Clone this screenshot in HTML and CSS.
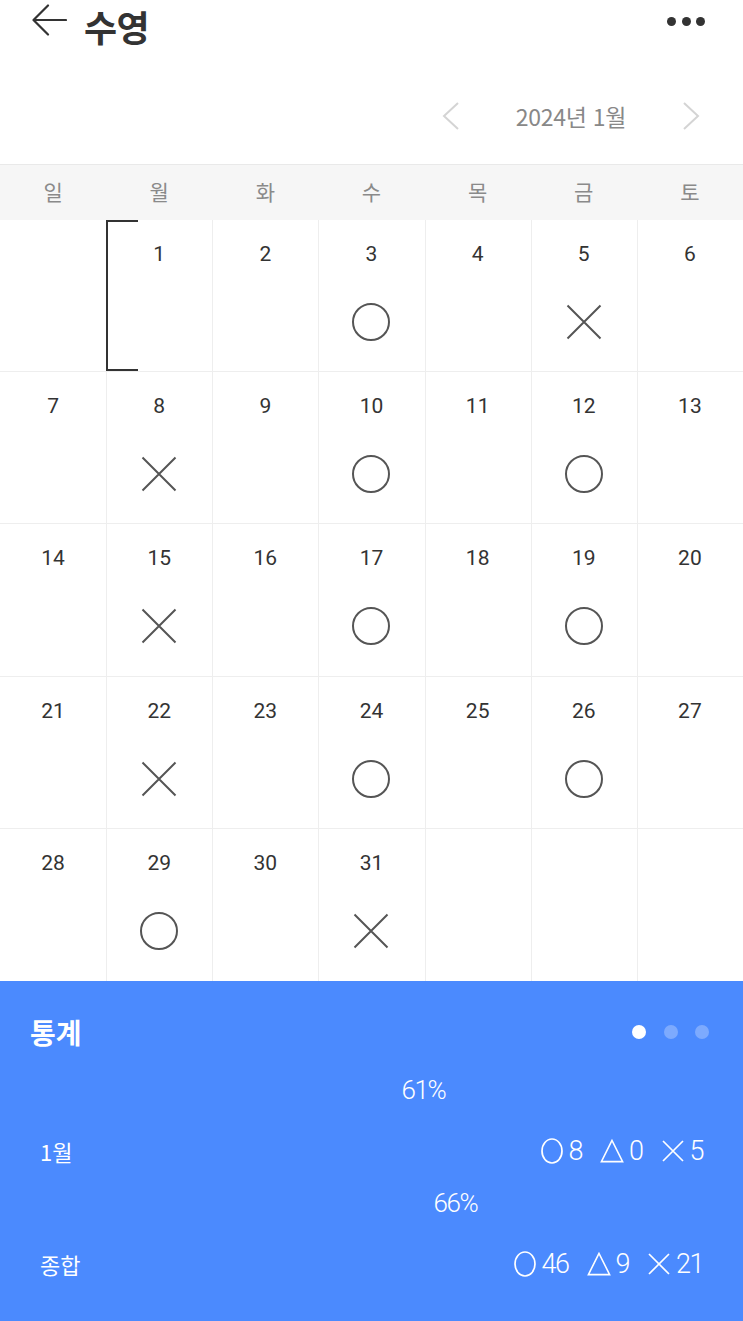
FILE: index.html
```html
<!DOCTYPE html>
<html lang="ko">
<head>
<meta charset="utf-8">
<title>수영</title>
<link rel="stylesheet" href="styles.css">
</head>
<body>
<div class="app">
  <header class="topbar">
    <div class="topbar-left">
      <svg class="back" width="36" height="34" viewBox="0 0 36 34"><path d="M35 16H3M17 1.5L2.5 16 17 30.5" fill="none" stroke="#333" stroke-width="2.2" stroke-linecap="round" stroke-linejoin="round"/></svg>
      <h1 class="title">수영</h1>
    </div>
    <div class="more"><span></span><span></span><span></span></div>
  </header>

  <nav class="month-nav">
    <svg class="chev" width="20" height="30" viewBox="0 0 20 30"><path d="M17 2L3 15l14 13" fill="none" stroke="#d4d4d4" stroke-width="2"/></svg>
    <span class="month-label">2024년 1월</span>
    <svg class="chev" width="20" height="30" viewBox="0 0 20 30"><path d="M3 2l14 13L3 28" fill="none" stroke="#d4d4d4" stroke-width="2"/></svg>
  </nav>

  <div class="weekdays">
    <div>일</div><div>월</div><div>화</div><div>수</div><div>목</div><div>금</div><div>토</div>
  </div>

  <div class="calendar">
    <div class="cell first"></div>
    <div class="cell selected"><span class="num">1</span></div>
    <div class="cell"><span class="num">2</span></div>
    <div class="cell"><span class="num">3</span><svg class="mark" viewBox="0 0 40 40"><circle cx="20" cy="20" r="18" fill="none" stroke="#555" stroke-width="2"/></svg></div>
    <div class="cell"><span class="num">4</span></div>
    <div class="cell"><span class="num">5</span><svg class="mark" viewBox="0 0 40 40"><path d="M3.5 3.5l33 33M36.5 3.5l-33 33" stroke="#555" stroke-width="2"/></svg></div>
    <div class="cell"><span class="num">6</span></div>

    <div class="cell first"><span class="num">7</span></div>
    <div class="cell"><span class="num">8</span><svg class="mark" viewBox="0 0 40 40"><path d="M3.5 3.5l33 33M36.5 3.5l-33 33" stroke="#555" stroke-width="2"/></svg></div>
    <div class="cell"><span class="num">9</span></div>
    <div class="cell"><span class="num">10</span><svg class="mark" viewBox="0 0 40 40"><circle cx="20" cy="20" r="18" fill="none" stroke="#555" stroke-width="2"/></svg></div>
    <div class="cell"><span class="num">11</span></div>
    <div class="cell"><span class="num">12</span><svg class="mark" viewBox="0 0 40 40"><circle cx="20" cy="20" r="18" fill="none" stroke="#555" stroke-width="2"/></svg></div>
    <div class="cell"><span class="num">13</span></div>

    <div class="cell first"><span class="num">14</span></div>
    <div class="cell"><span class="num">15</span><svg class="mark" viewBox="0 0 40 40"><path d="M3.5 3.5l33 33M36.5 3.5l-33 33" stroke="#555" stroke-width="2"/></svg></div>
    <div class="cell"><span class="num">16</span></div>
    <div class="cell"><span class="num">17</span><svg class="mark" viewBox="0 0 40 40"><circle cx="20" cy="20" r="18" fill="none" stroke="#555" stroke-width="2"/></svg></div>
    <div class="cell"><span class="num">18</span></div>
    <div class="cell"><span class="num">19</span><svg class="mark" viewBox="0 0 40 40"><circle cx="20" cy="20" r="18" fill="none" stroke="#555" stroke-width="2"/></svg></div>
    <div class="cell"><span class="num">20</span></div>

    <div class="cell first"><span class="num">21</span></div>
    <div class="cell"><span class="num">22</span><svg class="mark" viewBox="0 0 40 40"><path d="M3.5 3.5l33 33M36.5 3.5l-33 33" stroke="#555" stroke-width="2"/></svg></div>
    <div class="cell"><span class="num">23</span></div>
    <div class="cell"><span class="num">24</span><svg class="mark" viewBox="0 0 40 40"><circle cx="20" cy="20" r="18" fill="none" stroke="#555" stroke-width="2"/></svg></div>
    <div class="cell"><span class="num">25</span></div>
    <div class="cell"><span class="num">26</span><svg class="mark" viewBox="0 0 40 40"><circle cx="20" cy="20" r="18" fill="none" stroke="#555" stroke-width="2"/></svg></div>
    <div class="cell"><span class="num">27</span></div>

    <div class="cell first bottom"><span class="num">28</span></div>
    <div class="cell bottom"><span class="num">29</span><svg class="mark" viewBox="0 0 40 40"><circle cx="20" cy="20" r="18" fill="none" stroke="#555" stroke-width="2"/></svg></div>
    <div class="cell bottom"><span class="num">30</span></div>
    <div class="cell bottom"><span class="num">31</span><svg class="mark" viewBox="0 0 40 40"><path d="M3.5 3.5l33 33M36.5 3.5l-33 33" stroke="#555" stroke-width="2"/></svg></div>
    <div class="cell bottom"></div>
    <div class="cell bottom"></div>
    <div class="cell bottom"></div>
  </div>

  <section class="stats">
    <div class="stats-head">
      <h2 class="stats-title">통계</h2>
      <div class="pager"><span class="on"></span><span></span><span></span></div>
    </div>

    <div class="group">
      <div class="pct-track"><span class="pct" style="left:61%">61%</span></div>
      <div class="stat-row">
        <span class="stat-label">1월</span>
        <div class="counts">
          <span class="count"><svg class="ic" viewBox="0 0 24 26"><ellipse cx="12" cy="13" rx="10" ry="12" fill="none" stroke="#fff" stroke-width="1.7"/></svg><span class="n">8</span></span>
          <span class="count"><svg class="ic" viewBox="0 0 26 26"><path d="M13 1.5L1.5 24.5h23z" fill="none" stroke="#fff" stroke-width="1.7" stroke-linejoin="miter"/></svg><span class="n">0</span></span>
          <span class="count"><svg class="ic" viewBox="0 0 24 26"><path d="M2 3l20 20M22 3L2 23" stroke="#fff" stroke-width="1.7"/></svg><span class="n">5</span></span>
        </div>
      </div>
    </div>

    <div class="group">
      <div class="pct-track"><span class="pct" style="left:66%">66%</span></div>
      <div class="stat-row">
        <span class="stat-label">종합</span>
        <div class="counts">
          <span class="count"><svg class="ic" viewBox="0 0 24 26"><ellipse cx="12" cy="13" rx="10" ry="12" fill="none" stroke="#fff" stroke-width="1.7"/></svg><span class="n">46</span></span>
          <span class="count"><svg class="ic" viewBox="0 0 26 26"><path d="M13 1.5L1.5 24.5h23z" fill="none" stroke="#fff" stroke-width="1.7" stroke-linejoin="miter"/></svg><span class="n">9</span></span>
          <span class="count"><svg class="ic" viewBox="0 0 24 26"><path d="M2 3l20 20M22 3L2 23" stroke="#fff" stroke-width="1.7"/></svg><span class="n">21</span></span>
        </div>
      </div>
    </div>
  </section>
</div>
</body>
</html>
```

FILE: styles.css
```css
* { box-sizing: border-box; }
html, body { margin: 0; padding: 0; background: #fff; }
body {
  font-family: "Noto Sans CJK KR", "Noto Sans", Roboto, sans-serif;
  color: #333;
}
.app { width: 743px; min-height: 1321px; display: flex; flex-direction: column; }

.topbar {
  height: 44px;
  display: flex;
  align-items: center;
  justify-content: space-between;
  padding: 0 38px 0 31px;
}
.topbar-left { display: flex; align-items: center; }
.back { display: block; margin-top: -3px; }
.title {
  margin: 8px 0 0 17px;
  font-size: 36px;
  font-weight: 700;
  line-height: 1;
  color: #333;
  letter-spacing: -0.5px;
}
.more { display: flex; gap: 5.3px; margin-top: -2px; }
.more span { width: 9px; height: 9px; border-radius: 50%; background: #333; }

.month-nav {
  height: 120px;
  padding: 46px 42px 22px 0;
  display: flex;
  align-items: center;
  justify-content: flex-end;
}
.month-nav .chev { display: block; }
.month-label {
  font-size: 23px;
  color: #888;
  margin: 0 55px 0 55px;
  line-height: 52px;
  letter-spacing: -0.3px;
}

.weekdays {
  height: 56px;
  border-top: 1px solid #e9e9e9;
  background: #f6f6f6;
  display: grid;
  grid-template-columns: repeat(7, 1fr);
  align-items: center;
  text-align: center;
  font-size: 21px;
  line-height: 1;
  color: #8a8a8a;
  padding-bottom: 3px;
}

.calendar {
  display: grid;
  grid-template-columns: repeat(7, 1fr);
  grid-template-rows: repeat(5, 152.2px);
}
.cell {
  position: relative;
  border-left: 1px solid #eeeeee;
  border-bottom: 1px solid #eeeeee;
  display: flex;
  flex-direction: column;
  align-items: center;
  padding-top: 21px;
  padding-right: 1px;
}
.cell.first { border-left: none; padding-right: 0; }
.cell.bottom { border-bottom: none; }
.num {
  font-family: Roboto, "Noto Sans", sans-serif;
  font-size: 21px;
  line-height: 26px;
  color: #333;
}
.mark { width: 40px; height: 40px; margin-top: 35px; display: block; }
.selected::before {
  content: "";
  position: absolute;
  left: -1px;
  top: 0;
  bottom: 0;
  width: 30px;
  border: 2px solid #333;
  border-right: none;
}

.stats {
  flex: 1;
  background: #4b8afe;
  color: #fff;
}
.stats-head {
  display: flex;
  justify-content: space-between;
  align-items: center;
  padding: 32px 34px 9px 30px;
  height: 79px;
}
.stats-title {
  margin: 0;
  font-size: 28px;
  font-weight: 700;
  line-height: 38px;
  color: #fff;
}
.pager { display: flex; gap: 17.5px; }
.pager span { width: 14px; height: 14px; border-radius: 50%; background: rgba(255,255,255,0.28); }
.pager span.on { background: #fff; }

.group { height: 113px; padding-top: 15px; }
.pct-track {
  position: relative;
  width: 640px;
  margin-left: 33px;
  height: 30px;
}
.pct {
  position: absolute;
  top: 0;
  transform: translateX(-50%);
  font-family: Roboto, "Noto Sans", sans-serif;
  font-weight: 300;
  font-size: 26px;
  line-height: 30px;
  letter-spacing: -1.5px;
  color: #fff;
}
.stat-row {
  margin-top: 26px;
  height: 40px;
  display: flex;
  align-items: center;
  justify-content: space-between;
  padding: 0 40px;
}
.stat-label { font-size: 22px; line-height: 40px; }
.counts { display: flex; align-items: center; gap: 18px; }
.count { display: flex; align-items: center; gap: 5px; }
.ic { width: 24px; height: 26px; display: block; }
.n {
  font-family: Roboto, "Noto Sans", sans-serif;
  font-weight: 300;
  font-size: 27px;
  line-height: 40px;
  letter-spacing: -1.5px;
}
```
